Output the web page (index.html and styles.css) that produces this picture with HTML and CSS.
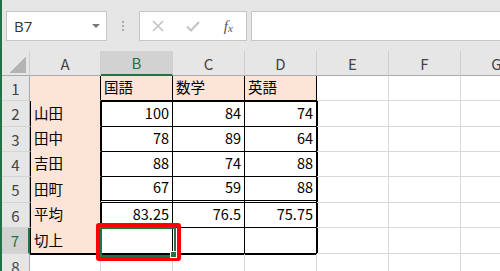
FILE: index.html
```html
<!DOCTYPE html>
<html>
	<head>
		<meta charset="UTF-8">
		<title>切上</title>
		<link rel="stylesheet" href="styles.css">
	</head>
	<body>
		<div class="app">
			<div class="bar">
				<div class="namebox"><span>B7</span><i class="arrow"></i></div>
				<div class="grip"><b></b><b></b><b></b></div>
				<div class="btns">
					<svg width="12" height="12" viewBox="0 0 12 12"><path d="M1 1L11 11M11 1L1 11" stroke="#c3c3c3" stroke-width="1.6" fill="none"/></svg>
					<svg width="14" height="11" viewBox="0 0 14 11"><path d="M1 5.5L5 9.5L13 1" stroke="#c3c3c3" stroke-width="2" fill="none"/></svg>
					<span class="fx">f<sub>x</sub></span>
				</div>
				<div class="formula"></div>
			</div>
			<div class="sheet">
				<!-- 列見出し -->
				<div class="hd corner"></div>
				<div class="hd ch">A</div>
				<div class="hd ch on">B</div>
				<div class="hd ch">C</div>
				<div class="hd ch">D</div>
				<div class="hd ch">E</div>
				<div class="hd ch">F</div>
				<div class="hd ch">G</div>

				<div class="hd rh">1</div>
				<div class="c pk k"></div>
				<div class="c pk k kb">国語</div>
				<div class="c pk k kb">数学</div>
				<div class="c pk k kb">英語</div>
				<div class="c"></div>
				<div class="c"></div>
				<div class="c"></div>

				<div class="hd rh">2</div>
				<div class="c pk kl k">山田</div>
				<div class="c k kb num top2 left2">100</div>
				<div class="c k kb num top2">84</div>
				<div class="c k kb num top2">74</div>
				<div class="c left2"></div>
				<div class="c"></div>
				<div class="c"></div>

				<div class="hd rh">3</div>
				<div class="c pk kl k">田中</div>
				<div class="c k kb num left2">78</div>
				<div class="c k kb num">89</div>
				<div class="c k kb num">64</div>
				<div class="c left2"></div>
				<div class="c"></div>
				<div class="c"></div>

				<div class="hd rh">4</div>
				<div class="c pk kl k">吉田</div>
				<div class="c k kb num left2">88</div>
				<div class="c k kb num">74</div>
				<div class="c k kb num">88</div>
				<div class="c left2"></div>
				<div class="c"></div>
				<div class="c"></div>

				<div class="hd rh">5</div>
				<div class="c pk kl k">田町</div>
				<div class="c k dbl num left2">67</div>
				<div class="c k dbl num">59</div>
				<div class="c k dbl num">88</div>
				<div class="c left2"></div>
				<div class="c"></div>
				<div class="c"></div>

				<div class="hd rh">6</div>
				<div class="c pk kl k">平均</div>
				<div class="c k kb num left2">83.25</div>
				<div class="c k kb num">76.5</div>
				<div class="c k kb num">75.75</div>
				<div class="c left2"></div>
				<div class="c"></div>
				<div class="c"></div>

				<div class="hd rh on">7</div>
				<div class="c pk kl k kb">切上</div>
				<div class="c k kb left2 cur">
					<span class="mark"></span>
					<span class="pick"></span>
				</div>
				<div class="c k kb"></div>
				<div class="c k kb"></div>
				<div class="c left2"></div>
				<div class="c"></div>
				<div class="c"></div>

				<div class="hd rh">8</div>
				<div class="c top2"></div>
				<div class="c top2"></div>
				<div class="c top2"></div>
				<div class="c top2"></div>
				<div class="c"></div>
				<div class="c"></div>
				<div class="c"></div>
			</div>
		</div>
	</body>
</html>
```
FILE: styles.css
```css
*{
	box-sizing: border-box;
}
body{
	margin: 0;
	background: #fff;
	font-family: "Noto Sans CJK JP", "Noto Sans", sans-serif;
}
.app{
	width: 500px;
	height: 271px;
	overflow: hidden;
	border-left: 2px solid #217346;
	background: #e6e6e6;
}

/* 数式バー */
.bar{
	height: 51px;
	display: flex;
	align-items: flex-start;
	padding: 11px 0 0 4px;
}
.namebox{
	width: 101px;
	height: 30px;
	background: #fff;
	border: 1px solid #c6c6c6;
	display: flex;
	align-items: center;
	justify-content: space-between;
	padding: 0 6px 0 7px;
	font-family: "Open Sans", sans-serif;
	font-size: 15px;
	color: #333;
}
.arrow{
	width: 0;
	height: 0;
	border-left: 4px solid transparent;
	border-right: 4px solid transparent;
	border-top: 4px solid #777;
}
.grip{
	width: 32px;
	height: 30px;
	display: flex;
	flex-direction: column;
	align-items: center;
	justify-content: center;
	gap: 2px;
}
.grip b{
	width: 2px;
	height: 2px;
	background: #aaa;
}
.btns{
	width: 108px;
	height: 30px;
	background: #fff;
	border: 1px solid #c6c6c6;
	display: grid;
	grid-template-columns: 1fr 1fr 1fr;
	align-items: center;
	justify-items: center;
}
.fx{
	font-family: "Liberation Serif", serif;
	font-style: italic;
	font-size: 15px;
	color: #555;
	line-height: 1;
}
.fx sub{
	font-size: 11px;
	vertical-align: -1px;
}
.formula{
	flex: 1;
	height: 30px;
	margin: 0 -4px 0 4px;
	background: #fff;
	border: 1px solid #c6c6c6;
}

/* シート */
.sheet{
	display: grid;
	grid-template-columns: 28px 71px 72px 72px 72px 72px 72px 72px;
	grid-template-rows: 25px 25px 26px 25px 25px 26px 25px 26px 25px;
	background: #fff;
}
.hd{
	background: #e6e6e6;
	border-right: 1px solid #cfcfcf;
	border-bottom: 1px solid #ababab;
	display: flex;
	align-items: center;
	justify-content: center;
	font-size: 15px;
	color: #444;
}
.rh{
	border-bottom-color: #d4d4d4;
	border-right-color: #ababab;
}
.hd.on{
	background: #d2d2d2;
	color: #217346;
}
.ch.on{
	border-bottom: 2px solid #217346;
}
.rh.on{
	border-right: 2px solid #217346;
}
.corner{
	background: #e6e6e6 linear-gradient(135deg, transparent 50%, #b4b4b4 50%) no-repeat right 3px bottom 2px / 17px 17px;
}

.c{
	border-right: 1px solid #d9d9d9;
	border-bottom: 1px solid #d9d9d9;
	background: #fff;
	display: flex;
	align-items: flex-end;
	padding: 0 3px 3px;
	font-size: 14.5px;
	line-height: 20px;
	color: #000;
	white-space: nowrap;
}
.pk{
	background: #fce4d6;
	border-color: #fce4d6;
}
.k{
	border-right-color: #000;
}
.kb{
	border-bottom-color: #000;
}
.kl{
	border-left: 1px solid #000;
}
.num{
	justify-content: flex-end;
}
.dbl{
	border-bottom: 3px double #000;
}
.top2{
	box-shadow: inset 0 1px 0 #000;
}
.left2{
	box-shadow: inset 1px 0 0 #000;
}
.top2.left2{
	box-shadow: inset 0 1px 0 #000, inset 1px 0 0 #000;
}

/* 選択セルと赤枠 */
.cur{
	position: relative;
}
.cur .mark{
	position: absolute;
	left: -5px;
	top: -5px;
	width: 85px;
	height: 38px;
	border: 4px solid #f00;
	border-radius: 3px;
	z-index: 2;
}
.cur .pick{
	position: absolute;
	left: -1px;
	top: -1px;
	width: 76px;
	height: 30px;
	border: 2px solid #217346;
	z-index: 3;
}
.cur .pick::after{
	content: "";
	position: absolute;
	right: -2px;
	bottom: -2px;
	width: 5px;
	height: 5px;
	background: #217346;
	box-shadow: 0 0 0 1px #fff;
}
```
